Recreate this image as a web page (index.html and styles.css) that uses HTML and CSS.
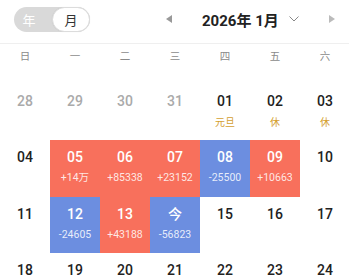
FILE: index.html
```html
<!DOCTYPE html>
<html lang="zh">
<head>
<meta charset="utf-8">
<link rel="stylesheet" href="styles.css">
</head>
<body>
<div class="page">
  <header class="top">
    <div class="seg">
      <span class="seg-item">年</span>
      <span class="seg-item active">月</span>
    </div>
    <div class="nav">
      <span class="tri tri-left"></span>
      <span class="title">2026年 1月</span>
      <svg class="chev" width="10" height="6" viewBox="0 0 10 6"><path d="M0.5 0.5 L5 5 L9.5 0.5" fill="none" stroke="#888" stroke-width="1"/></svg>
      <span class="tri tri-right"></span>
    </div>
  </header>
  <div class="weekdays">
    <span>日</span><span>一</span><span>二</span><span>三</span><span>四</span><span>五</span><span>六</span>
  </div>
  <div class="grid">
    <div class="cell dim"><span class="num">28</span></div>
    <div class="cell dim"><span class="num">29</span></div>
    <div class="cell dim"><span class="num">30</span></div>
    <div class="cell dim"><span class="num">31</span></div>
    <div class="cell"><span class="num">01</span><span class="sub gold">元旦</span></div>
    <div class="cell"><span class="num">02</span><span class="sub gold">休</span></div>
    <div class="cell"><span class="num">03</span><span class="sub gold">休</span></div>

    <div class="cell"><span class="num">04</span></div>
    <div class="cell red"><span class="num">05</span><span class="sub">+14万</span></div>
    <div class="cell red"><span class="num">06</span><span class="sub">+85338</span></div>
    <div class="cell red"><span class="num">07</span><span class="sub">+23152</span></div>
    <div class="cell blue"><span class="num">08</span><span class="sub">-25500</span></div>
    <div class="cell red"><span class="num">09</span><span class="sub">+10663</span></div>
    <div class="cell"><span class="num">10</span></div>

    <div class="cell"><span class="num">11</span></div>
    <div class="cell blue"><span class="num">12</span><span class="sub">-24605</span></div>
    <div class="cell red"><span class="num">13</span><span class="sub">+43188</span></div>
    <div class="cell blue"><span class="num">今</span><span class="sub">-56823</span></div>
    <div class="cell"><span class="num">15</span></div>
    <div class="cell"><span class="num">16</span></div>
    <div class="cell"><span class="num">17</span></div>

    <div class="cell"><span class="num">18</span></div>
    <div class="cell"><span class="num">19</span></div>
    <div class="cell"><span class="num">20</span></div>
    <div class="cell"><span class="num">21</span></div>
    <div class="cell"><span class="num">22</span></div>
    <div class="cell"><span class="num">23</span></div>
    <div class="cell"><span class="num">24</span></div>
  </div>
</div>
</body>
</html>
```

FILE: styles.css
```css
html, body {
  margin: 0;
  padding: 0;
  background: #fff;
}
body {
  font-family: Roboto, "Noto Sans", "Noto Sans CJK SC", sans-serif;
  color: #222;
}
.page {
  width: 349px;
  height: 277px;
  overflow: hidden;
}
.top {
  height: 43px;
  border-bottom: 1px solid #efefef;
  display: flex;
  align-items: center;
  padding-left: 14px;
  box-sizing: content-box;
}
.seg {
  width: 76px;
  height: 25px;
  border-radius: 13px;
  background: #d9d9d9;
  display: flex;
  align-items: stretch;
  margin-top: -5px;
  box-sizing: border-box;
}
.seg-item {
  flex: 1;
  display: flex;
  align-items: center;
  justify-content: center;
  font-family: "Noto Sans CJK SC", sans-serif;
  font-size: 13px;
  color: #fff;
  padding-right: 8px;
}
.seg-item.active {
  background: #fff;
  color: #333;
  border-radius: 13px;
  border: 1px solid #dcdcdc;
  box-shadow: 0 0 1px rgba(0, 0, 0, 0.1);
  flex: 0 0 38px;
  box-sizing: border-box;
  padding-right: 0;
}
.nav {
  display: flex;
  align-items: center;
  margin-left: 76px;
  margin-top: -5px;
}
.tri {
  width: 0;
  height: 0;
  border-top: 4px solid transparent;
  border-bottom: 4px solid transparent;
}
.tri-left {
  border-right: 6px solid #999;
}
.tri-right {
  border-left: 6px solid #bbb;
  margin-left: 30px;
}
.title {
  margin-left: 30px;
  font-family: Roboto, "Noto Sans CJK SC", sans-serif;
  font-weight: 700;
  font-size: 15px;
  color: #222;
}
.chev {
  margin-left: 10px;
}
.weekdays {
  display: grid;
  grid-template-columns: repeat(7, 50px);
  height: 24px;
  line-height: 24px;
  font-family: "Noto Sans CJK SC", sans-serif;
  font-size: 10.5px;
  color: #8a8a8a;
  text-align: center;
}
.grid {
  margin-top: 16px;
  display: grid;
  grid-template-columns: repeat(7, 50px);
  grid-auto-rows: 56.3px;
}
.cell {
  display: flex;
  flex-direction: column;
  align-items: center;
  padding-top: 8px;
  box-sizing: border-box;
}
.num {
  font-size: 14px;
  line-height: 18px;
  font-weight: 500;
  color: #222;
}
.dim .num {
  color: #aaa;
}
.sub {
  margin-top: 5px;
  font-size: 10.5px;
  line-height: 14px;
  font-family: Roboto, "Noto Sans CJK SC", sans-serif;
}
.gold {
  color: #d4a030;
  font-family: "Noto Sans CJK SC", sans-serif;
  font-size: 10px;
}
.red {
  background: #f8705c;
}
.blue {
  background: #6c8ee0;
}
.red .num, .blue .num {
  color: #fff;
}
.red .sub, .blue .sub {
  color: rgba(255, 255, 255, 0.85);
}
```
